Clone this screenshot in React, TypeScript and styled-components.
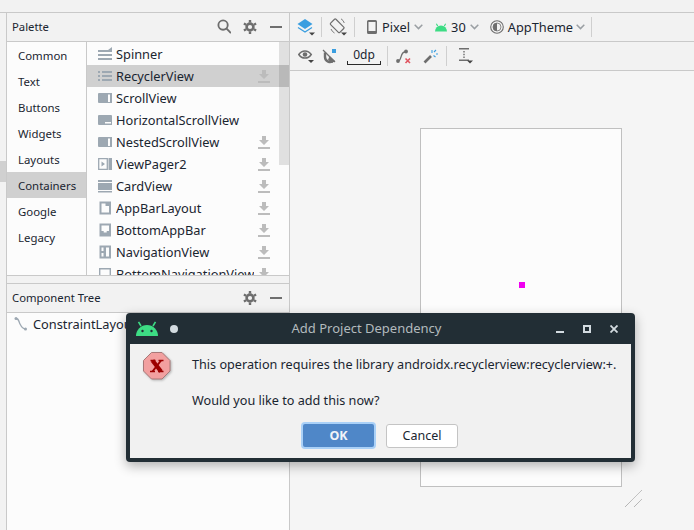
import React from 'react';
import styled, { createGlobalStyle } from 'styled-components';

const Global = createGlobalStyle`
  html, body { margin: 0; padding: 0; background: #f2f2f2; }
  * { box-sizing: border-box; }
`;

const Page = styled.div`
  position: relative;
  width: 694px;
  height: 530px;
  overflow: hidden;
  background: #f2f2f2;
  color: #1a2530;
  font-family: "Noto Sans", sans-serif;
  font-size: 13px;
`;
const TopStrip = styled.div`
  height: 13px;
  border-bottom: 1px solid #c9c9c9;
`;
const Main = styled.div`
  display: flex;
  height: 517px;
`;
const Gutter = styled.div`
  width: 7px;
  flex: none;
  padding-top: 148px;
  border-right: 1px solid #c9c9c9;
`;
const GutterTab = styled.div`
  height: 21px;
  background: #d0d0d0;
`;
const LeftPanel = styled.div`
  width: 283px;
  flex: none;
  display: flex;
  flex-direction: column;
  border-right: 1px solid #c9c9c9;
`;
const PanelHeader = styled.div`
  height: 29px;
  flex: none;
  display: flex;
  align-items: center;
  padding: 0 7px 1px 5px;
  gap: 13px;
  border-bottom: 1px solid #c9c9c9;
  font-size: 11.3px;
`;
const PanelTitle = styled.span`
  flex: 1;
`;
const PaletteBody = styled.div`
  height: 234px;
  flex: none;
  display: flex;
  background: #fcfcfc;
  border-bottom: 1px solid #c9c9c9;
`;
const Categories = styled.div`
  width: 80px;
  flex: none;
  border-right: 1px solid #c9c9c9;
`;
const Category = styled.div<{ $active?: boolean }>`
  height: 26px;
  padding-left: 11px;
  display: flex;
  align-items: center;
  font-size: 11.4px;
  background: ${p => (p.$active ? '#d0d0d0' : 'transparent')};
`;
const ListArea = styled.div`
  position: relative;
  flex: 1;
  overflow: hidden;
  padding-top: 1px;
  font-size: 12.8px;
`;
const ListRow = styled.div<{ $active?: boolean }>`
  height: 22px;
  display: flex;
  align-items: center;
  padding-left: 11px;
  padding-right: 19px;
  gap: 4px;
  white-space: nowrap;
  background: ${p => (p.$active ? '#d0d0d0' : 'transparent')};
`;
const ListName = styled.span`
  flex: 1;
  overflow: hidden;
`;
const Scrollbar = styled.div`
  position: absolute;
  top: 0;
  right: 0;
  width: 10px;
  height: 123px;
  background: rgba(0, 0, 0, 0.11);
`;
const Splitter = styled.div`
  height: 8px;
  flex: none;
  border-bottom: 1px solid #c9c9c9;
`;
const TreeBody = styled.div`
  flex: 1;
  background: #fcfcfc;
  padding: 0 0 0 7px;
  font-size: 12.8px;
`;
const TreeRow = styled.div`
  height: 22px;
  display: flex;
  align-items: center;
  gap: 5px;
`;
const RightPanel = styled.div`
  flex: 1;
  display: flex;
  flex-direction: column;
  min-width: 0;
`;
const Toolbar = styled.div`
  height: 29px;
  flex: none;
  display: flex;
  align-items: center;
  padding-left: 7px;
  border-bottom: 1px solid #c9c9c9;
  white-space: nowrap;
  font-size: 12.8px;
`;
const Sep = styled.div<{ $ml: number }>`
  width: 1px;
  height: 20px;
  background: #cfcfcf;
  flex: none;
  margin-left: ${p => p.$ml}px;
`;
const Slot = styled.div<{ $ml: number }>`
  display: flex;
  align-items: center;
  flex: none;
  margin-left: ${p => p.$ml}px;
`;
const Ruler = styled.div`
  width: 34px;
  height: 18px;
  margin-left: 10px;
  flex: none;
  border: 1px solid #2a2a2a;
  border-top: none;
  text-align: center;
  line-height: 15px;
  font-size: 12px;
  clip-path: polygon(0 14px, 1px 14px, 1px 0, 33px 0, 33px 14px, 34px 14px, 34px 18px, 0 18px);
`;
const Canvas = styled.div`
  flex: 1;
  background: #f5f5f5;
  padding: 57px 0 0 130px;
`;
const Device = styled.div`
  position: relative;
  width: 202px;
  height: 359px;
  background: #fcfcfc;
  border: 1px solid #c0c0c0;
`;
const Marker = styled.div`
  position: absolute;
  left: 98px;
  top: 153px;
  width: 6px;
  height: 6px;
  background: #f000f0;
`;
const Handle = styled.svg`
  position: absolute;
  left: 204px;
  top: 361px;
`;
const Dialog = styled.div`
  position: absolute;
  left: 126px;
  top: 313px;
  width: 509px;
  height: 149px;
  display: flex;
  flex-direction: column;
  background: #222e35;
  border-radius: 4px;
  padding: 0 4px 4px;
  box-shadow: 0 4px 12px rgba(0, 0, 0, 0.3);
`;
const TitleBar = styled.div`
  position: relative;
  height: 31px;
  flex: none;
  display: flex;
  align-items: center;
  padding-left: 6px;
  gap: 12px;
`;
const DialogTitle = styled.div`
  position: absolute;
  left: 0;
  right: 28px;
  top: 0;
  line-height: 31px;
  text-align: center;
  color: #b2babd;
  font-size: 13px;
`;
const TitleDot = styled.div`
  width: 8px;
  height: 8px;
  border-radius: 50%;
  background: #d3dbe0;
`;
const WindowButtons = styled.div`
  margin-left: auto;
  margin-right: 13px;
  display: flex;
  gap: 19px;
  align-items: center;
`;
const DialogBody = styled.div`
  flex: 1;
  display: flex;
  flex-direction: column;
  background: #f1f1f1;
`;
const MessageRow = styled.div`
  display: flex;
  padding: 8px 0 0 13px;
  gap: 21px;
`;
const Message = styled.div`
  line-height: 36px;
  margin-top: -6px;
  font-size: 12.65px;
  white-space: nowrap;
`;
const Buttons = styled.div`
  display: flex;
  margin: 4px 0 0 171px;
  gap: 10px;
  align-items: center;
`;
const OkButton = styled.div`
  width: 75px;
  height: 27px;
  border-radius: 4px;
  background: #4f87c8;
  border: 2px solid #a9d0f7;
  color: #f0f4f8;
  font-weight: 700;
  font-size: 12.5px;
  display: flex;
  align-items: center;
  justify-content: center;
`;
const CancelButton = styled.div`
  width: 72px;
  height: 24px;
  border-radius: 3px;
  background: #fff;
  border: 1px solid #c4c4c4;
  font-size: 12.5px;
  display: flex;
  align-items: center;
  justify-content: center;
`;
const SearchSvg = styled.svg`
  margin-right: -1px;
`;

const G = '#9da8b2';
const D = '#6e6e6e';

const Search = () => (
  <SearchSvg width="14" height="15" viewBox="0 0 15 16" fill="none" stroke={D} strokeWidth="2">
    <circle cx="6.500" cy="6.500" r="5" /><path d="M10 10l5 5" />
  </SearchSvg>
);
const Gear = () => (
  <svg width="14" height="14" viewBox="0 0 14 14" fill="none" stroke={D}>
    <circle cx="7" cy="7" r="3.400" strokeWidth="2.600" />
    <path strokeWidth="2.400" d="M7 0v2.500M7 11.500V14M0.900 3.500l2.200 1.200M10.900 9.300l2.200 1.200M0.900 10.500l2.200-1.200M10.900 4.700l2.200-1.200" />
  </svg>
);
const Minus = () => (
  <svg width="12" height="14" viewBox="0 0 12 14"><rect x="0" y="6" width="12" height="2" fill={D} /></svg>
);
const Download = () => (
  <svg width="12" height="13" viewBox="0 0 12 13" fill="#bcbcbc">
    <path d="M4 0h4v4h3L6 9 1 4h3zM0 11h12v2H0z" />
  </svg>
);

const Ic = ({ children }: { children: React.ReactNode }) => (
  <svg width="14" height="14" viewBox="0 0 14 14" style={{ flex: 'none' }}>{children}</svg>
);
const SpinnerIcon = () => (
  <Ic><path fill={G} d="M0 3h10l4-3v3H14v2H0zM0 7h14v2H0zM0 11h14v2H0z" /></Ic>
);
const RecyclerIcon = () => (
  <Ic><path fill={G} d="M0 2h2v2H0zM4 2h10v2H4zM0 6h2v2H0zM4 6h10v2H4zM0 10h2v2H0zM4 10h10v2H4z" /></Ic>
);
const ScrollIcon = () => (
  <Ic><path fill={G} d="M1 2h13v10H1a1 1 0 0 1-1-1V3a1 1 0 0 1 1-1zM10 3.500V11h2V3.500z" fillRule="evenodd" /></Ic>
);
const HorizIcon = () => (
  <Ic><path fill={G} fillRule="evenodd" d="M1 2h12a1 1 0 0 1 1 1v9H1a1 1 0 0 1-1-1V3a1 1 0 0 1 1-1zM7 9v1.500h6V9z" /></Ic>
);
const PagerIcon = () => (
  <Ic><path fill="none" stroke={G} strokeWidth="1.300" d="M.7 1.700h8.600v10.600H.7z" /><path fill={G} d="M3.500 4.500L7 7l-3.500 2.500zM10.500 1h3.500v12h-3.500z" /></Ic>
);
const CardIcon = () => (
  <Ic><path fill={G} d="M0 1h14v2H0zM0 4h14v7H0zM0 12h14v1.500H0z" /></Ic>
);
const AppBarIcon = () => (
  <Ic><path fill={G} fillRule="evenodd" d="M1.500 .5h11.500v13H1.500zM3.500 5v6.500h7.500V5H7.500V2.500H3.500z" /></Ic>
);
const BottomBarIcon = () => (
  <Ic><path fill={G} fillRule="evenodd" d="M1.500 .5h11.500v13H1.500zM3.500 2.500V8h2.200v1.500h3V8H11V2.500z" /></Ic>
);
const NavIcon = () => (
  <Ic><path fill={G} fillRule="evenodd" d="M1.500 .5h11.500v13H1.500zM3.500 2.500v3.500h2V2.500zM3.500 8v3.500h2V8zM8 2.500v9h3v-9z" /></Ic>
);
const BottomNavIcon = () => (
  <Ic><path fill="none" stroke={G} strokeWidth="1.400" d="M1.700 1.700h10.600v10.600H1.700z" /></Ic>
);

const Layers = () => (
  <svg width="18" height="18" viewBox="0 0 18 18">
    <path fill="#3a9ee0" d="M8 1l7.500 5L8 11 .5 6z" />
    <path fill="none" stroke="#3a9ee0" strokeWidth="1.300" d="M1 9.500L8 14l7-4.500" />
    <path fill="#444" d="M12 14.500h6L15 17.500z" />
  </svg>
);
const Rotate = () => (
  <svg width="18" height="18" viewBox="0 0 18 18" fill="none" stroke="#6e6e6e">
    <rect x="4.500" y="1.500" width="7.500" height="13" rx="1" transform="rotate(-45 8 8)" strokeWidth="1.200" />
    <path d="M2 11a7.500 7.500 0 0 0 3.500 4M12 .8A7.500 7.500 0 0 1 15.300 5" strokeWidth=".9" />
    <path fill="#444" stroke="none" d="M12 14.500h6L15 17.500z" />
  </svg>
);
const Phone = () => (
  <svg width="10" height="14" viewBox="0 0 10 14">
    <path fill="#6e6e6e" fillRule="evenodd" d="M1.500 0h7A1.500 1.500 0 0 1 10 1.500v11A1.500 1.500 0 0 1 8.500 14h-7A1.500 1.500 0 0 1 0 12.500v-11A1.500 1.500 0 0 1 1.500 0zM1.500 2v9h7V2z" />
  </svg>
);
const Chevron = () => (
  <svg width="9" height="6" viewBox="0 0 9 6" fill="none" stroke="#9a9fa3" strokeWidth="1.500">
    <path d="M.7.8L4.500 4.600 8.300.8" />
  </svg>
);
const AndroidHead = ({ w, h, c }: { w: number; h: number; c: string }) => (
  <svg width={w} height={h} viewBox="0 0 22 15">
    <path fill={c} d="M0 15a11 11 0 0 1 22 0z" />
    <path stroke={c} strokeWidth="1.600" d="M5 5L2.500 .8M17 5L19.500 .8" />
    <circle cx="6.500" cy="10" r="1.200" fill="#222e35" />
    <circle cx="15.500" cy="10" r="1.200" fill="#222e35" />
  </svg>
);
const AndroidSmall = () => (
  <svg width="12" height="9" viewBox="0 0 22 15">
    <path fill="#3ddc84" d="M0 15a11 11 0 0 1 22 0z" />
    <path stroke="#3ddc84" strokeWidth="2" d="M5 5L2.500 .8M17 5L19.500 .8" />
  </svg>
);
const Theme = () => (
  <svg width="14" height="14" viewBox="0 0 14 14">
    <circle cx="7" cy="7" r="6.300" fill="none" stroke="#6e6e6e" strokeWidth="1.100" />
    <path fill="#6e6e6e" d="M7 3a4 4 0 0 0 0 8z" />
    <circle cx="7" cy="7" r="4" fill="none" stroke="#6e6e6e" strokeWidth=".8" />
  </svg>
);
const Eye = () => (
  <svg width="16" height="16" viewBox="0 0 16 16">
    <path fill="none" stroke="#6e6e6e" strokeWidth="1.600" d="M.8 6.500C4 1.800 10 1.800 13.200 6.500 10 11.200 4 11.200 .8 6.500z" />
    <circle cx="7" cy="6.500" r="2.300" fill="#6e6e6e" />
    <path fill="#444" d="M10 12h6L13 15z" />
  </svg>
);
const Magnet = () => (
  <svg width="15" height="15" viewBox="0 0 15 15">
    <path fill="none" stroke="#6e6e6e" strokeWidth="2.400" d="M3 3.500V8a5 5 0 0 0 8.500 3.500" />
    <path stroke="#6e6e6e" strokeWidth="1.300" d="M1 1l12 12" />
    <path fill="#6e6e6e" d="M7.500 7l5.500 5-3 2-4-3z" />
    <rect x="10" y="0" width="4" height="4" fill="#3a9ee0" />
  </svg>
);
const PathX = () => (
  <svg width="15" height="15" viewBox="0 0 15 15">
    <path fill="none" stroke="#6e6e6e" strokeWidth="1.300" d="M2 12C6 12 4 3 9 3" />
    <circle cx="2" cy="12" r="1.900" fill="#6e6e6e" />
    <circle cx="10" cy="2.500" r="1.900" fill="#6e6e6e" />
    <path stroke="#e05560" strokeWidth="1.600" d="M9.500 9.500l4.500 4.500M14 9.500l-4.500 4.500" />
  </svg>
);
const Wand = () => (
  <svg width="15" height="15" viewBox="0 0 15 15">
    <path stroke="#6e6e6e" strokeWidth="2.600" d="M1.500 13.500L8 7" />
    <path stroke="#3a9ee0" strokeWidth="1.100" d="M9 1v3M13 5h2M11 3l2-2M10.500 6.500l2 1.500" />
  </svg>
);
const MarginIcon = () => (
  <svg width="16" height="16" viewBox="0 0 16 16">
    <path fill="#6e6e6e" d="M1 0h10v1.600H1zM1 11.500h10v1.600H1zM5.300 3h1.400v1.500H5.300zM5.300 5.700h1.400v1.500H5.300zM5.300 8.400h1.400v1.500H5.300z" />
    <path fill="#444" d="M9 12.500h6L12 15.500z" />
  </svg>
);
const ConstraintIcon = () => (
  <svg width="14" height="14" viewBox="0 0 14 14" style={{ flex: 'none' }}>
    <path fill="none" stroke="#9da8b2" strokeWidth="1.300" d="M2 1.500c3 0 2.500 2.500 4 5.500s3 5 5.500 5" />
    <circle cx="2" cy="1.500" r="1.500" fill="#9da8b2" />
    <circle cx="11.500" cy="12" r="1.500" fill="#9da8b2" />
  </svg>
);
const ErrorIcon = () => (
  <svg width="28" height="29" viewBox="0 0 28 29" style={{ flex: 'none', filter: 'drop-shadow(1px 1px 1px rgba(0,0,0,.25))' }}>
    <path fill="#f2a0a0" stroke="#a87878" strokeWidth="1" d="M8.500 .5h10.500l8 8v10.500l-8 8H8.500l-8-8V8.500z" />
    <path stroke="#9c0000" strokeWidth="4.200" d="M9.500 8.500l8.500 11" />
    <path stroke="#9c0000" strokeWidth="2" d="M18 8.500l-8.500 11" />
    <path stroke="#9c0000" strokeWidth="1.400" d="M7.500 8.500h5M15.500 8.500h5M7 19.500h5M15 19.500h5.500" />
  </svg>
);
const MinBtn = () => (
  <svg width="8" height="9" viewBox="0 0 8 9"><rect y="7" width="8" height="2" fill="#d3dbe0" /></svg>
);
const MaxBtn = () => (
  <svg width="8" height="8" viewBox="0 0 8 8"><rect x="1" y="1" width="6" height="6" fill="none" stroke="#d3dbe0" strokeWidth="2" /></svg>
);
const CloseBtn = () => (
  <svg width="8" height="8" viewBox="0 0 8 8"><path stroke="#d3dbe0" strokeWidth="1.800" d="M.5.500l7 7M7.500.500l-7 7" /></svg>
);

const categories = ['Common', 'Text', 'Buttons', 'Widgets', 'Layouts', 'Containers', 'Google', 'Legacy'];
const items: [string, React.FC, boolean][] = [
  ['Spinner', SpinnerIcon, false],
  ['RecyclerView', RecyclerIcon, true],
  ['ScrollView', ScrollIcon, false],
  ['HorizontalScrollView', HorizIcon, false],
  ['NestedScrollView', ScrollIcon, true],
  ['ViewPager2', PagerIcon, true],
  ['CardView', CardIcon, true],
  ['AppBarLayout', AppBarIcon, true],
  ['BottomAppBar', BottomBarIcon, true],
  ['NavigationView', NavIcon, true],
  ['BottomNavigationView', BottomNavIcon, true],
];

export default function App() {
  return (
    <Page>
      <Global />
      <TopStrip />
      <Main>
        <Gutter><GutterTab /></Gutter>
        <LeftPanel>
          <PanelHeader>
            <PanelTitle>Palette</PanelTitle>
            <Search /><Gear /><Minus />
          </PanelHeader>
          <PaletteBody>
            <Categories>
              {categories.map(c => <Category key={c} $active={c === 'Containers'}>{c}</Category>)}
            </Categories>
            <ListArea>
              <Scrollbar />
              {items.map(([name, Icon, dl]) => (
                <ListRow key={name} $active={name === 'RecyclerView'}>
                  <Icon />
                  <ListName>{name}</ListName>
                  {dl && <Download />}
                </ListRow>
              ))}
            </ListArea>
          </PaletteBody>
          <Splitter />
          <PanelHeader>
            <PanelTitle>Component Tree</PanelTitle>
            <Gear /><Minus />
          </PanelHeader>
          <TreeBody>
            <TreeRow><ConstraintIcon /><span>ConstraintLayout</span></TreeRow>
          </TreeBody>
        </LeftPanel>
        <RightPanel>
          <Toolbar>
            <Layers />
            <Sep $ml={6} />
            <Slot $ml={7}><Rotate /></Slot>
            <Sep $ml={7} />
            <Slot $ml={12}><Phone /></Slot>
            <Slot $ml={5}>Pixel</Slot>
            <Slot $ml={4}><Chevron /></Slot>
            <Slot $ml={12}><AndroidSmall /></Slot>
            <Slot $ml={4}>30</Slot>
            <Slot $ml={4}><Chevron /></Slot>
            <Slot $ml={11}><Theme /></Slot>
            <Slot $ml={4}>AppTheme</Slot>
            <Slot $ml={3}><Chevron /></Slot>
            <Sep $ml={6} />
          </Toolbar>
          <Toolbar>
            <Slot $ml={1}><Eye /></Slot>
            <Slot $ml={8}><Magnet /></Slot>
            <Ruler>0dp</Ruler>
            <Sep $ml={6} />
            <Slot $ml={8}><PathX /></Slot>
            <Slot $ml={12}><Wand /></Slot>
            <Sep $ml={8} />
            <Slot $ml={11}><MarginIcon /></Slot>
          </Toolbar>
          <Canvas>
            <Device>
              <Marker />
              <Handle width="18" height="18" viewBox="0 0 18 18" fill="none" stroke="#777" strokeWidth=".7" strokeDasharray="1 .5">
                <path d="M0 17L17 0M9 17l8-8" />
              </Handle>
            </Device>
          </Canvas>
        </RightPanel>
      </Main>
      <Dialog>
        <TitleBar>
          <DialogTitle>Add Project Dependency</DialogTitle>
          <AndroidHead w={22} h={15} c="#3ddc84" />
          <TitleDot />
          <WindowButtons><MinBtn /><MaxBtn /><CloseBtn /></WindowButtons>
        </TitleBar>
        <DialogBody>
          <MessageRow>
            <ErrorIcon />
            <Message>
              This operation requires the library androidx.recyclerview:recyclerview:+.<br />
              Would you like to add this now?
            </Message>
          </MessageRow>
          <Buttons>
            <OkButton>OK</OkButton>
            <CancelButton>Cancel</CancelButton>
          </Buttons>
        </DialogBody>
      </Dialog>
    </Page>
  );
}
